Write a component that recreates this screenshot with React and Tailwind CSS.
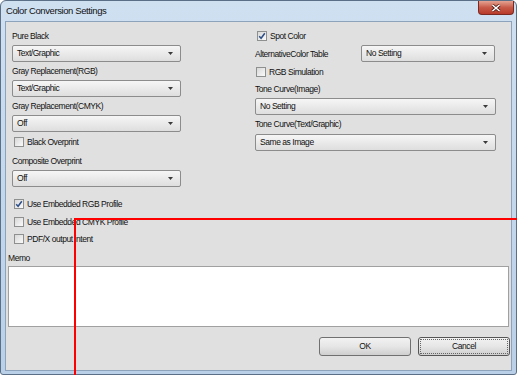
import React from 'react'

const font = "font-['Liberation_Sans',Arial,sans-serif]"

function Label({ children, className = '' }) {
  return <div className={`h-[12px] leading-[12px] text-[8.5px] tracking-[-0.45px] text-[#111] ${className}`}>{children}</div>
}

function Combo({ value, className = '' }) {
  return (
    <div className={`h-[17px] flex items-center pl-[4px] pr-[7px] rounded-[2px] border border-[#8c8c8c] bg-linear-to-b from-[#f6f6f6] to-[#dedede] text-[8.5px] tracking-[-0.45px] text-[#111] ${className}`}>
      <span className="flex-1">{value}</span>
      <svg width="5" height="3" viewBox="0 0 5 3">
        <path d="M0 0h5L2.5 3z" fill="#3a3a3a" />
      </svg>
    </div>
  )
}

function Check({ label, checked, className = '' }) {
  return (
    <div className={`h-[12px] flex items-center gap-[3px] text-[8.5px] tracking-[-0.45px] text-[#111] ${className}`}>
      <div className="w-[10px] h-[10px] border border-[#8e8f8f] bg-linear-to-br from-[#d8d8d8] to-[#fafafa] flex items-center justify-center">
        {checked && (
          <svg width="8" height="8" viewBox="0 0 8 8">
            <path d="M1.2 4.2 3.1 6.3 6.8 1.2" fill="none" stroke="#2c4f87" strokeWidth="1.5" />
          </svg>
        )}
      </div>
      <span>{label}</span>
    </div>
  )
}

function Button({ children, focused }) {
  return (
    <div className={`w-[92px] h-[19px] rounded-[3px] border ${focused ? 'border-[#555]' : 'border-[#707070]'} bg-linear-to-b from-[#f2f2f2] via-[#e6e6e6] to-[#cfcfcf] p-[1px]`}>
      <div className={`h-full flex items-center justify-center text-[8.5px] tracking-[-0.45px] text-[#111] ${focused ? 'border border-dotted border-[#666]' : ''}`}>
        {children}
      </div>
    </div>
  )
}

export default function App() {
  return (
    <div className={`relative w-[517px] h-[375px] overflow-hidden ${font}`}>
      <div className="w-full h-full flex flex-col border border-[#5b6f86] rounded-t-[6px] rounded-b-[3px] bg-linear-to-b from-[#cfe0f1] to-[#b9d0e8]">
        {/* title bar */}
        <div className="h-[20px] flex items-start shrink-0">
          <div className="pl-[5px] pt-[4px] text-[9.5px] tracking-[-0.4px] leading-[12px] text-[#111]">Color Conversion Settings</div>
          <div className="ml-auto mr-[2px] w-[36px] h-[14px] rounded-b-[4px] border border-[#7a2a22] border-t-0 bg-linear-to-b from-[#e4a393] via-[#c75a48] to-[#b83a2a] flex items-center justify-center">
            <svg width="10" height="8" viewBox="0 0 10 8">
              <path d="M1.5 1 8.5 7M8.5 1 1.5 7" stroke="#4a1a14" strokeWidth="3" />
              <path d="M1.5 1 8.5 7M8.5 1 1.5 7" stroke="#fff" strokeWidth="1.6" />
            </svg>
          </div>
        </div>

        {/* client area */}
        <div className="flex-1 mx-[4px] mb-[3px] border border-[#8da3bb] bg-[#e0e0e0] flex flex-col pl-[2px] pr-[2px] pt-[8px]">
          <div className="flex">
            {/* left column */}
            <div className="w-[169px] ml-[4px] flex flex-col">
              <Label>Pure Black</Label>
              <Combo value="Text/Graphic" className="mt-[3px]" />
              <Label className="mt-[3px]">Gray Replacement(RGB)</Label>
              <Combo value="Text/Graphic" className="mt-[3px]" />
              <Label className="mt-[3px]">Gray Replacement(CMYK)</Label>
              <Combo value="Off" className="mt-[3px]" />
              <Check label="Black Overprint" className="mt-[4px] ml-[2px]" />
              <Label className="mt-[7px]">Composite Overprint</Label>
              <Combo value="Off" className="mt-[3px]" />
            </div>
            {/* right column */}
            <div className="w-[241px] ml-[74px] flex flex-col">
              <Check label="Spot Color" checked className="ml-[2px]" />
              <div className="mt-[3px] flex items-center">
                <Label className="flex-1">AlternativeColor Table</Label>
                <Combo value="No Setting" className="w-[134px] mr-[1px]" />
              </div>
              <Check label="RGB Simulation" className="mt-[4px] ml-[1px]" />
              <Label className="mt-[5px]">Tone Curve(Image)</Label>
              <Combo value="No Setting" className="mt-[3px]" />
              <Label className="mt-[3px]">Tone Curve(Text/Graphic)</Label>
              <Combo value="Same as Image" className="mt-[4px]" />
            </div>
          </div>

          <div className="ml-[6px] flex flex-col">
            <Check label="Use Embedded RGB Profile" checked className="mt-[11px]" />
            <Check label="Use Embedded CMYK Profile" className="mt-[6px]" />
            <Check label="PDF/X output intent" className="mt-[5px]" />
          </div>
          <Label className="mt-[7px]">Memo</Label>
          <div className="mt-[2px] h-[61px] bg-white border border-[#a0a0a0]" />
          <div className="mt-[10px] flex justify-end gap-[7px] -mr-[1px]">
            <Button>OK</Button>
            <Button focused>Cancel</Button>
          </div>
        </div>
      </div>

      {/* red annotation lines */}
      <div className="absolute left-[74px] top-[218px] w-[2px] h-[157px] bg-[#f00]" />
      <div className="absolute left-[74px] top-[218px] w-[443px] h-[2px] bg-[#f00]" />
    </div>
  )
}
